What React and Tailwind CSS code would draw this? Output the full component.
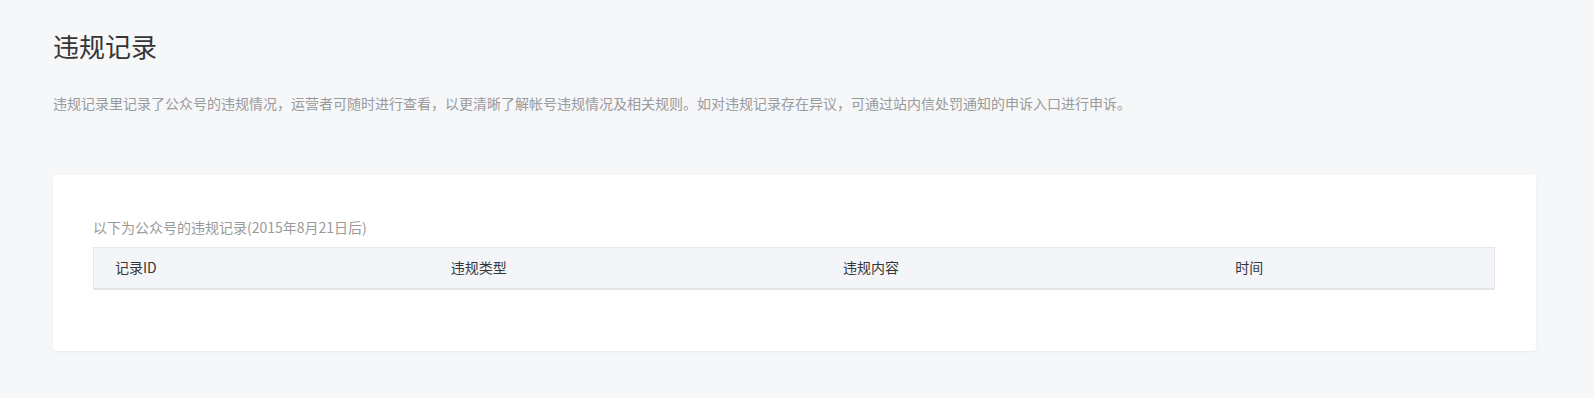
import React from 'react';

const columns = [
    { title: '记录ID', width: 'w-[24%]' },
    { title: '违规类型', width: 'w-[28%]' },
    { title: '违规内容', width: 'w-[28%]' },
    { title: '时间', width: 'w-[20%]' },
];

const App = () => {
    return (
        <div
            className="min-h-screen bg-[#f6f7f9] pl-[53px] pr-[58px] pt-[28px] pb-[40px]"
            style={{ fontFamily: '"Noto Sans CJK SC", "Noto Sans", sans-serif' }}
        >
            <h2 className="text-[26px] leading-[36px] font-normal text-[#353535]">违规记录</h2>
            <p className="mt-[29px] text-[14px] leading-[20px] text-[#9a9a9a]">
                违规记录里记录了公众号的违规情况，运营者可随时进行查看，以更清晰了解帐号违规情况及相关规则。如对违规记录存在异议，可通过站内信处罚通知的申诉入口进行申诉。
            </p>

            <div className="mt-[62px] bg-white rounded-[4px] shadow-[0_1px_2px_rgba(150,150,150,0.12)] pl-[40px] pr-[41px] pt-[42px] pb-[61px]">
                <p className="text-[14px] leading-[20px] text-[#9a9a9a]">以下为公众号的违规记录(2015年8月21日后)</p>
                <table className="mt-[10px] w-full table-fixed border-collapse">
                    <thead>
                        <tr className="bg-[#f4f5f9] border-x border-t border-[#e7e7eb] border-b-2 border-b-[#e4e4ea]">
                            {columns.map((col) => (
                                <th
                                    key={col.title}
                                    className={`${col.width} h-[41px] px-[21px] text-left text-[14px] font-normal text-[#353535]`}
                                >
                                    {col.title}
                                </th>
                            ))}
                        </tr>
                    </thead>
                </table>
            </div>
        </div>
    );
};

export default App;
